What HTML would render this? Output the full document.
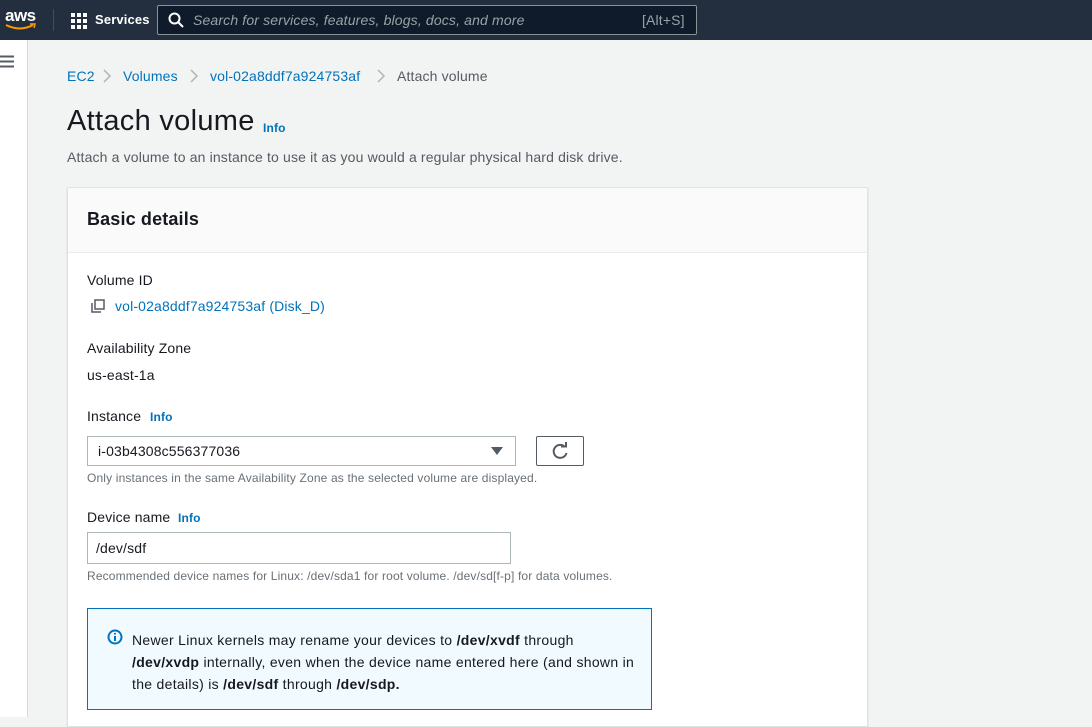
<!DOCTYPE html>
<html><head><style>
*{box-sizing:border-box;margin:0;padding:0}
body{width:1092px;height:717px;overflow:hidden;background:#f2f3f3;font-family:"Liberation Sans",Arial,sans-serif;color:#16191f;position:relative;font-size:14px;letter-spacing:0.15px}
.hdr{position:absolute;left:0;top:0;width:1092px;height:40px;background:#232f3e}
.side{position:absolute;left:0;top:40px;width:28px;height:677px;background:#fff;border-right:1px solid #d5dbdb}
.a{position:absolute;white-space:nowrap}
.link{color:#0073bb}
.info{color:#0073bb;font-weight:bold;font-size:12px}
.card{position:absolute;left:67px;top:187px;width:801px;height:540px;background:#fff;border:1px solid #e0e3e3;box-shadow:0 1px 1px rgba(0,28,36,.2)}
.ch{height:65px;background:#fafafa;border-bottom:1px solid #eaeded}
.box{position:absolute;border:1px solid #aab7b8;background:#fff}
.small{font-size:12px;color:#687078}
.chev{position:absolute;top:69px}
</style></head><body>
<div class="hdr">
 <div class="a" style="left:5px;top:6px;color:#fff;font-size:17px;font-weight:bold;letter-spacing:-0.5px">aws</div>
 <svg class="a" style="left:5px;top:23px" width="32" height="8"><path d="M1 2 Q15 9 28 2" stroke="#ff9900" stroke-width="2" fill="none"/><path d="M25 1 L30 1 L29 5" stroke="#ff9900" stroke-width="1.5" fill="none"/></svg>
 <div class="a" style="left:53px;top:9px;width:1px;height:22px;background:#414d5c"></div>
 <svg class="a" style="left:71px;top:13px" width="16" height="16" fill="#fff"><rect x="0" y="0" width="4" height="4"/><rect x="6" y="0" width="4" height="4"/><rect x="12" y="0" width="4" height="4"/><rect x="0" y="6" width="4" height="4"/><rect x="6" y="6" width="4" height="4"/><rect x="12" y="6" width="4" height="4"/><rect x="0" y="12" width="4" height="4"/><rect x="6" y="12" width="4" height="4"/><rect x="12" y="12" width="4" height="4"/></svg>
 <div class="a" style="left:95px;top:12px;color:#fff;font-size:13px;font-weight:bold">Services</div>
 <div class="a" style="left:157px;top:5px;width:540px;height:30px;border:1px solid #879596;border-radius:2px;background:#0f1b2a"></div>
 <svg class="a" style="left:168px;top:12px" width="16" height="16"><circle cx="6.5" cy="6.5" r="5" stroke="#fff" stroke-width="2" fill="none"/><path d="M10 10 L15 15" stroke="#fff" stroke-width="2"/></svg>
 <div class="a" style="left:193px;top:12px;color:#95a5a6;font-size:14px;font-style:italic">Search for services, features, blogs, docs, and more</div>
 <div class="a" style="left:642px;top:12px;color:#95a5a6;font-size:14px">[Alt+S]</div>
</div>
<div class="side"></div>
<svg class="a" style="left:0;top:55px" width="14" height="13"><path d="M0 1.5H14M0 6.5H14M0 11.5H14" stroke="#545b64" stroke-width="2"/></svg>
<div class="a link" style="left:67px;top:68px">EC2</div>
<svg class="chev" style="left:102px" width="10" height="14"><path d="M2 1L8 7L2 13" stroke="#aab7b8" stroke-width="1.5" fill="none"/></svg>
<div class="a link" style="left:123px;top:68px">Volumes</div>
<svg class="chev" style="left:189px" width="10" height="14"><path d="M2 1L8 7L2 13" stroke="#aab7b8" stroke-width="1.5" fill="none"/></svg>
<div class="a link" style="left:210px;top:68px">vol-02a8ddf7a924753af</div>
<svg class="chev" style="left:376px" width="10" height="14"><path d="M2 1L8 7L2 13" stroke="#aab7b8" stroke-width="1.5" fill="none"/></svg>
<div class="a" style="left:397px;top:68px;color:#545b64">Attach volume</div>
<div class="a" style="left:67px;top:105px;font-size:29px;letter-spacing:0.3px">Attach volume</div>
<div class="a info" style="left:263px;top:121px">Info</div>
<div class="a" style="left:67px;top:149px;color:#545b64">Attach a volume to an instance to use it as you would a regular physical hard disk drive.</div>
<div class="card"><div class="ch"></div></div>
<div class="a" style="left:87px;top:209px;font-size:18px;font-weight:bold">Basic details</div>
<div class="a" style="left:87px;top:272px">Volume ID</div>
<svg class="a" style="left:91px;top:299px" width="14" height="14"><rect x="4" y="1" width="9" height="9" stroke="#545b64" stroke-width="1.5" fill="none"/><path d="M1 4V13H10" stroke="#545b64" stroke-width="1.5" fill="none"/></svg>
<div class="a link" style="left:115px;top:298px">vol-02a8ddf7a924753af (Disk_D)</div>
<div class="a" style="left:87px;top:340px">Availability Zone</div>
<div class="a" style="left:87px;top:367px">us-east-1a</div>
<div class="a" style="left:87px;top:408px">Instance</div>
<div class="a info" style="left:150px;top:410px">Info</div>
<div class="box" style="left:87px;top:436px;width:429px;height:30px"></div>
<div class="a" style="left:98px;top:443px">i-03b4308c556377036</div>
<svg class="a" style="left:491px;top:447px" width="12" height="9"><path d="M0 0H12L6 8Z" fill="#545b64"/></svg>
<div class="box" style="left:536px;top:436px;width:48px;height:30px;border:1px solid #545b64;border-radius:2px"></div>
<svg class="a" style="left:551px;top:442px" width="18" height="18"><path d="M14 5 A6.5 6.5 0 1 0 15.5 11" stroke="#545b64" stroke-width="2" fill="none"/><path d="M10 4.5H15V0" stroke="#545b64" stroke-width="2" fill="none"/></svg>
<div class="a small" style="left:87px;top:471px">Only instances in the same Availability Zone as the selected volume are displayed.</div>
<div class="a" style="left:87px;top:509px">Device name</div>
<div class="a info" style="left:178px;top:511px">Info</div>
<div class="box" style="left:87px;top:532px;width:424px;height:32px"></div>
<div class="a" style="left:96px;top:540px">/dev/sdf</div>
<div class="a small" style="left:87px;top:569px">Recommended device names for Linux: /dev/sda1 for root volume. /dev/sd[f-p] for data volumes.</div>
<div class="a" style="left:87px;top:608px;width:565px;height:102px;background:#f1faff;border:1px solid #0073bb"></div>
<svg class="a" style="left:107px;top:629px" width="16" height="16"><circle cx="8" cy="8" r="6.5" stroke="#0073bb" stroke-width="2" fill="none"/><path d="M8 7V12M8 4V5.5" stroke="#0073bb" stroke-width="2"/></svg>
<div class="a" style="left:132px;top:629px;line-height:22px;letter-spacing:0.3px">Newer Linux kernels may rename your devices to <b>/dev/xvdf</b> through<br><b>/dev/xvdp</b> internally, even when the device name entered here (and shown in<br>the details) is <b>/dev/sdf</b> through <b>/dev/sdp.</b></div>
</body></html>
